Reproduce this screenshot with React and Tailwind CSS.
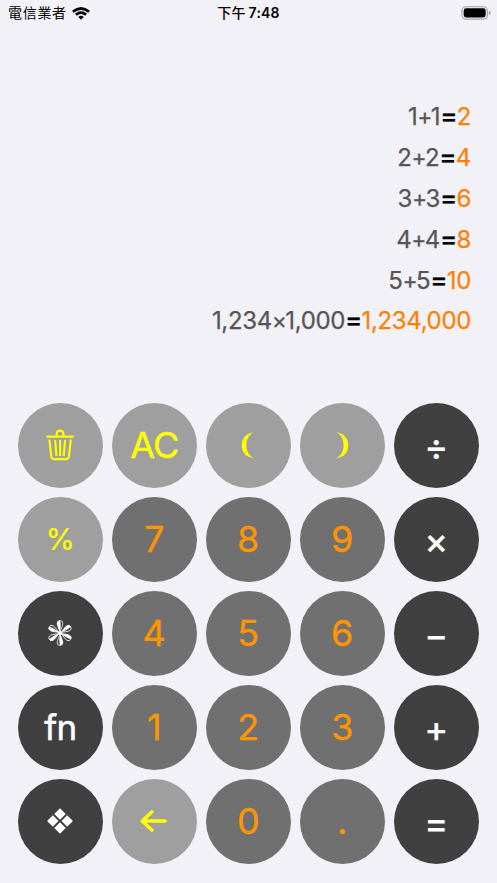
const history = [
  { left: '1', sign: '+', right: '1', result: '2' },
  { left: '2', sign: '+', right: '2', result: '4' },
  { left: '3', sign: '+', right: '3', result: '6' },
  { left: '4', sign: '+', right: '4', result: '8' },
  { left: '5', sign: '+', right: '5', result: '10' },
  { left: '1,234', sign: '×', right: '1,000', result: '1,234,000' },
];

function Trash() {
  return (
    <svg className="size-9" viewBox="0 0 36 36" fill="none" stroke="currentColor" strokeWidth="2.2" strokeLinecap="round" strokeLinejoin="round">
      <path d="M5.3 9.6H30.9M14.7 9.2V7.4Q14.7 3.6 18.1 3.6Q21.5 3.6 21.5 7.4V9.2" />
      <path d="M7.5 13.4L9.3 29.6Q9.7 32.1 12 32.1H24.2Q26.5 32.1 26.9 29.6L28.7 13.4M13.2 13.9L14.4 28.2M18.1 13.9V28.2M23 13.9L21.8 28.2" />
    </svg>
  );
}

function LeftParen() {
  return (
    <svg className="size-9" viewBox="0 0 36 36" fill="currentColor">
      <path d="M23.8 5.2C15 6.3 11.8 12.2 11.8 18.2C11.8 24.2 15 30 23.8 31.1C18.5 28.5 16.4 23.5 16.4 18.2C16.4 12.9 18.5 7.8 23.8 5.2Z" />
    </svg>
  );
}

function RightParen() {
  return (
    <svg className="size-9" viewBox="0 0 36 36" fill="currentColor">
      <path d="M12.2 5.2C21 6.3 24.2 12.2 24.2 18.2C24.2 24.2 21 30 12.2 31.1C17.5 28.5 19.6 23.5 19.6 18.2C19.6 12.9 17.5 7.8 12.2 5.2Z" />
    </svg>
  );
}

function Flower() {
  return (
    <svg className="size-9" viewBox="-18 -18 36 36">
      {[0, 60, 120, 180, 240, 300].map((a) => (
        <g key={a} transform={`rotate(${a})`}>
          <path d="M0 -1C-0.8 -4 -2.8 -7 -2.8 -9.6A2.8 2.8 0 0 1 2.8 -9.6C2.8 -7 0.8 -4 0 -1Z" fill="none" stroke="white" strokeWidth="0.8" />
          <path d="M0 -1C-0.8 -4 -2.8 -7 -2.8 -9.6A2.8 2.8 0 0 1 0 -12.4C1 -9 0.8 -5 0 -1Z" fill="white" />
        </g>
      ))}
      <circle r="1.8" fill="white" />
    </svg>
  );
}

function Diamonds() {
  return (
    <svg className="size-9" viewBox="-18 -18 36 36" fill="currentColor">
      <path d="M0 -12.7L5.7 -7L0 -1.3L-5.7 -7ZM0 1.3L5.7 7L0 12.7L-5.7 7ZM-7.2 -5.7L-1.5 0L-7.2 5.7L-12.9 0ZM7.2 -5.7L12.9 0L7.2 5.7L1.5 0Z" />
    </svg>
  );
}

function Arrow() {
  return (
    <svg className="size-9" viewBox="-18 -18 36 36" fill="none" stroke="currentColor" strokeWidth="3.3" strokeLinecap="round" strokeLinejoin="round">
      <path d="M11.2 0H-11.8M-1.9 -9.2L-11.8 0L-1.9 9.2" />
    </svg>
  );
}

const light = 'bg-[#9f9f9f] text-[#ffff00]';
const mid = 'bg-[#707070] text-[#ff9500]';
const dark = 'bg-[#404040] text-white';
const op = 'pt-[4px] text-[36px] font-medium [-webkit-text-stroke:0.1px_currentColor]';
const num = 'text-[36px] [-webkit-text-stroke:0.35px_currentColor]';

const keys = [
  { id: 'trash', tone: light, label: <Trash /> },
  { id: 'ac', tone: light, label: 'AC', text: 'text-[36px] tracking-[-1px] [-webkit-text-stroke:0.35px_currentColor]' },
  { id: 'open', tone: light, label: <LeftParen /> },
  { id: 'close', tone: light, label: <RightParen /> },
  { id: 'div', tone: dark, label: '÷', text: op },
  { id: 'pct', tone: light, label: '%', text: 'text-[30px] [-webkit-text-stroke:0.15px_currentColor]' },
  { id: '7', tone: mid, label: '7', text: num },
  { id: '8', tone: mid, label: '8', text: num },
  { id: '9', tone: mid, label: '9', text: num },
  { id: 'mul', tone: dark, label: '×', text: op },
  { id: 'flower', tone: dark, label: <Flower /> },
  { id: '4', tone: mid, label: '4', text: num },
  { id: '5', tone: mid, label: '5', text: num },
  { id: '6', tone: mid, label: '6', text: num },
  { id: 'sub', tone: dark, label: '−', text: op },
  { id: 'fn', tone: dark, label: 'fn', text: 'pt-[1px] text-[35px] tracking-[-0.7px] [-webkit-text-stroke:0.5px_currentColor]' },
  { id: '1', tone: mid, label: '1', text: num },
  { id: '2', tone: mid, label: '2', text: num },
  { id: '3', tone: mid, label: '3', text: num },
  { id: 'add', tone: dark, label: '+', text: op },
  { id: 'diamonds', tone: dark, label: <Diamonds /> },
  { id: 'back', tone: light, label: <Arrow /> },
  { id: '0', tone: mid, label: '0', text: num },
  { id: 'dot', tone: mid, label: '.', text: num },
  { id: 'eq', tone: dark, label: '=', text: op },
];

function StatusBar() {
  return (
    <header className="grid h-[26px] grid-cols-3 items-center text-[14px] leading-none text-black">
      <div className="flex items-center gap-[5px] pl-[8px]">
        <span className="whitespace-nowrap tracking-[0.7px]">電信業者</span>
        <svg className="h-[13px] w-[18px]" viewBox="0 0 18 13" fill="none" stroke="black" strokeWidth="2.7">
          <path d="M0.9 4.8Q9 -1.8 17.1 4.8M3.9 7.8Q9 3.6 14.1 7.8" />
          <path d="M9 12.7L6.2 9.9Q9 7.8 11.8 9.9Z" fill="black" stroke="none" />
        </svg>
      </div>
      <div className="whitespace-nowrap text-center font-semibold tracking-[0.2px]">
        <span className="font-medium">下午</span><span className="pl-[3px]">7:48</span>
      </div>
      <div className="flex justify-end pr-[6px]">
        <svg className="h-[14px] w-[30px]" viewBox="0 0 30 14">
          <rect x="1" y="0.7" width="25.4" height="12.4" rx="3.8" fill="none" stroke="#a3a3a5" strokeWidth="1.1" />
          <rect x="2.7" y="2.3" width="22" height="9.2" rx="2.4" fill="black" />
          <path d="M27.8 4.8Q29.7 5.4 29.7 6.9Q29.7 8.4 27.8 9Z" fill="#a3a3a5" />
        </svg>
      </div>
    </header>
  );
}

export default function App() {
  return (
    <main className="flex h-[883px] w-[497px] flex-col overflow-hidden bg-[#f2f1f7] font-['Inter','Noto_Sans_CJK_TC',sans-serif]">
      <StatusBar />
      <section className="flex h-[377px] flex-col items-end pr-[26px] pt-[69px] text-[24px] text-[#555555]">
        {history.map(({ left, sign, right, result }) => (
          <p key={left} className="h-[40.9px] whitespace-nowrap leading-[41px] tracking-[-0.35px] [-webkit-text-stroke:0.25px_currentColor]">
            {left}
            <span className="text-[23px] tracking-[-1.8px]">{sign}</span>
            {right}
            <span className="text-[26px] font-medium tracking-[-1.8px] text-black">=</span>
            <span className="pl-[1px] text-[#ff8000]">{result}</span>
          </p>
        ))}
      </section>
      <section className="grid grid-cols-[repeat(5,84.5px)] gap-[9.5px] pl-[18px]">
        {keys.map(({ id, tone, label, text = '' }) => (
          <button key={id} className={`flex size-[84.5px] items-center justify-center rounded-full leading-none ${tone} ${text}`}>
            {label}
          </button>
        ))}
      </section>
    </main>
  );
}
